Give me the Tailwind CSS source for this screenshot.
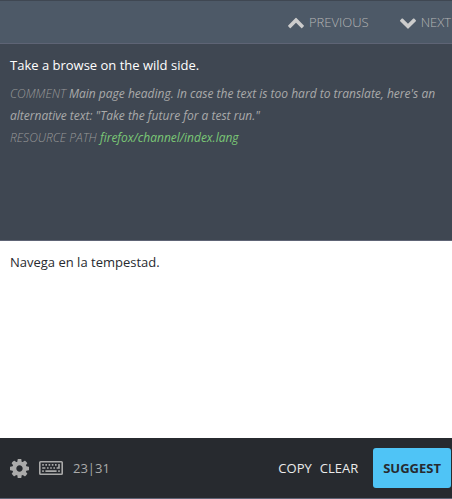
<!DOCTYPE html>
<html lang="en">
<head>
<meta charset="utf-8">
<meta name="viewport" content="width=device-width, initial-scale=1">
<title>Translation editor</title>
<script src="https://cdn.jsdelivr.net/npm/@tailwindcss/browser@4"></script>
</head>
<body class="flex h-screen flex-col overflow-hidden bg-[#3f4752] font-['Open_Sans',sans-serif] text-[13px] leading-[22px]">
  <nav aria-label="Strings" class="flex h-11 shrink-0 items-center justify-end gap-[31px] border-t border-b border-t-[#3f4752] border-b-[#5e6475] bg-[#4d5967] pr-px font-light text-[#b4b4b4]">
    <a href="#previous" class="flex items-center gap-[5px]">
      <svg class="size-4" viewBox="90 90 1612 1612" fill="#cccccc" aria-hidden="true"><path d="M1683 1331l-166 165q-19 19-45 19t-45-19l-531-531-531 531q-19 19-45 19t-45-19l-166-165q-19-19-19-45.5t19-45.5l742-741q19-19 45-19t45 19l742 741q19 19 19 45.5t-19 45.5z"/></svg>
      PREVIOUS
    </a>
    <a href="#next" class="flex items-center gap-[5px]">
      <svg class="size-4" viewBox="90 90 1612 1612" fill="#cccccc" aria-hidden="true"><path d="M1683 808l-742 741q-19 19-45 19t-45-19l-742-741q-19-19-19-45.5t19-45.5l166-165q19-19 45-19t45 19l531 531 531-531q19-19 45-19t45 19l166 165q19 19 19 45.5t-19 45.5z"/></svg>
      NEXT
    </a>
  </nav>
  <section aria-label="Source" class="h-[197px] shrink-0 border-b border-[#5e6475] px-2.5 pt-2.5">
    <p class="text-white">Take a browse on the wild side.</p>
    <div class="mt-[7px] text-xs leading-[22px] text-[#aaaaaa] italic">
      <p><span class="font-light text-[#999999]">COMMENT</span> Main page heading. In case the text is too hard to translate, here's an alternative text: "Take the future for a test run."</p>
      <p><span class="font-light text-[#999999]">RESOURCE PATH</span> <a href="#resource" class="text-[#7bc876]">firefox/channel/index.lang</a></p>
    </div>
  </section>
  <textarea aria-label="Translation" spellcheck="false" class="block min-h-0 w-full grow resize-none bg-white px-2.5 py-2.5 text-[#272a2f] outline-none">Navega en la tempestad.</textarea>
  <footer class="flex h-[61px] shrink-0 items-center border-b border-[#5e6475] bg-[#272a2f] pr-px pl-2.5">
    <button type="button" aria-label="Settings">
      <svg class="size-[19px]" viewBox="128 128 1536 1536" fill="#aaaaaa" aria-hidden="true"><path d="M1152 896q0-106-75-181t-181-75-181 75-75 181 75 181 181 75 181-75 75-181zm512-109v222q0 12-8 23t-20 13l-185 28q-19 54-39 91 35 50 107 138 10 12 10 25t-9 23q-27 37-99 108t-94 71q-12 0-26-9l-138-108q-44 23-91 38-16 136-29 186-7 28-36 28h-222q-14 0-24.5-8.5t-11.5-21.5l-28-184q-49-16-90-37l-141 107q-10 9-25 9-14 0-25-11-126-114-165-168-7-10-7-23 0-12 8-23 15-21 51-66.5t54-70.5q-27-50-41-99l-183-27q-13-2-21-12.5t-8-23.5v-222q0-12 8-23t19-13l186-28q14-46 39-92-40-57-107-138-10-12-10-24 0-10 9-23 26-36 98.5-107.5t94.5-71.5q13 0 26 10l138 107q44-23 91-38 16-136 29-186 7-28 36-28h222q14 0 24.5 8.5t11.5 21.5l28 184q49 16 90 37l142-107q9-9 24-9 13 0 25 10 129 119 165 170 7 8 7 22 0 12-8 23-15 21-51 66.5t-54 70.5q26 50 41 98l183 28q13 2 21 12.5t8 23.5z"/></svg>
    </button>
    <button type="button" aria-label="Keyboard shortcuts" class="ml-2.5">
      <svg class="h-[14px] w-6" viewBox="0 0 15 9" preserveAspectRatio="none" fill="#aaaaaa" aria-hidden="true"><path fill-rule="evenodd" d="M1 0H14Q15 0 15 1V8Q15 9 14 9H1Q0 9 0 8V1Q0 0 1 0ZM1 1V8H14V1Z"/><path d="M2 2h1v1H2zM4 2h1v1H4zM6 2h1v1H6zM8 2h1v1H8zM10 2h1v1h-1zM12 2h1v3h-2V4h1zM2 4h2v1H2zM5 4h1v1H5zM7 4h1v1H7zM9 4h1v1H9zM2 6h1v1H2zM4 6h7v1H4zM12 6h1v1h-1z"/></svg>
    </button>
    <span class="ml-2.5 text-[#aaaaaa]">23|31</span>
    <div class="ml-auto flex items-center">
      <button type="button" class="text-[#ebebeb]">COPY</button>
      <button type="button" class="ml-2 text-[#ebebeb]">CLEAR</button>
      <button type="button" class="ml-[15px] h-10 rounded-[3px] bg-[#4fc4f6] px-2.5 font-bold text-[#272a2f]">SUGGEST</button>
    </div>
  </footer>
</body>
</html>
